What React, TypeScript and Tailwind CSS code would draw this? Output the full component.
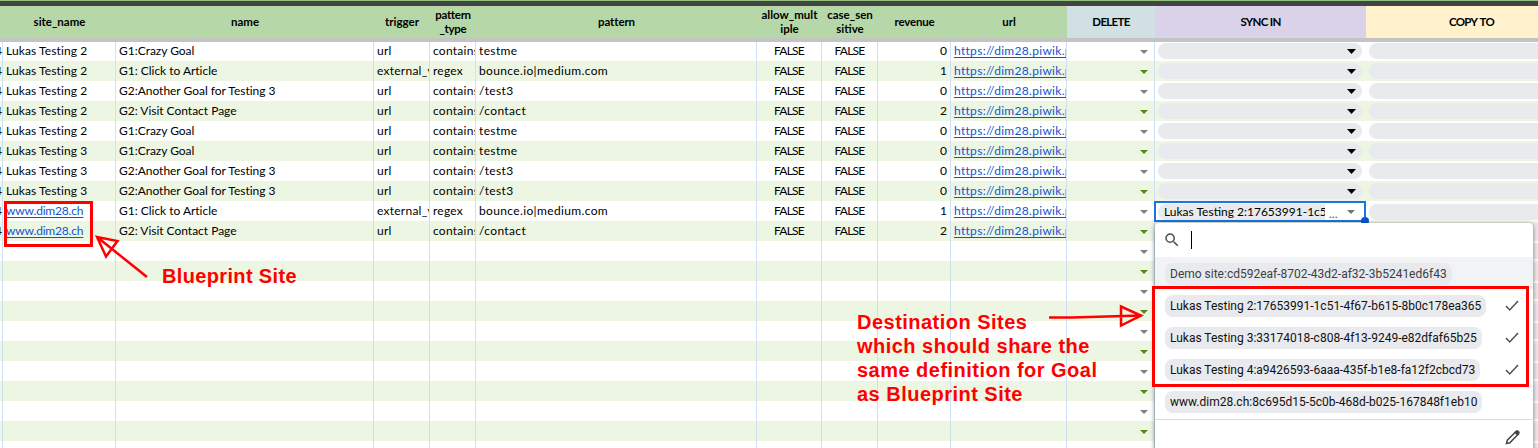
import React from "react";

const GRID =
  "grid grid-cols-[3px_113px_258px_56px_46px_281px_65px_56px_73px_116px_88px_211px_172px]";

type Goal = {
  site: string;
  link?: boolean;
  name: string;
  trigger: string;
  type: string;
  pattern: string;
  revenue: number;
};

const goals: Goal[] = [
  { site: "Lukas Testing 2", name: "G1:Crazy Goal", trigger: "url", type: "contains", pattern: "testme", revenue: 0 },
  { site: "Lukas Testing 2", name: "G1: Click to Article", trigger: "external_v", type: "regex", pattern: "bounce.io|medium.com", revenue: 1 },
  { site: "Lukas Testing 2", name: "G2:Another Goal for Testing 3", trigger: "url", type: "contains", pattern: "/test3", revenue: 0 },
  { site: "Lukas Testing 2", name: "G2: Visit Contact Page", trigger: "url", type: "contains", pattern: "/contact", revenue: 2 },
  { site: "Lukas Testing 2", name: "G1:Crazy Goal", trigger: "url", type: "contains", pattern: "testme", revenue: 0 },
  { site: "Lukas Testing 3", name: "G1:Crazy Goal", trigger: "url", type: "contains", pattern: "testme", revenue: 0 },
  { site: "Lukas Testing 3", name: "G2:Another Goal for Testing 3", trigger: "url", type: "contains", pattern: "/test3", revenue: 0 },
  { site: "Lukas Testing 3", name: "G2:Another Goal for Testing 3", trigger: "url", type: "contains", pattern: "/test3", revenue: 0 },
  { site: "www.dim28.ch", link: true, name: "G1: Click to Article", trigger: "external_v", type: "regex", pattern: "bounce.io|medium.com", revenue: 1 },
  { site: "www.dim28.ch", link: true, name: "G2: Visit Contact Page", trigger: "url", type: "contains", pattern: "/contact", revenue: 2 },
];

const rows: (Goal | null)[] = [...goals, ...Array<null>(11).fill(null)];

const options = [
  { label: "Demo site:cd592eaf-8702-43d2-af32-3b5241ed6f43", checked: false },
  { label: "Lukas Testing 2:17653991-1c51-4f67-b615-8b0c178ea365", checked: true },
  { label: "Lukas Testing 3:33174018-c808-4f13-9249-e82dfaf65b25", checked: true },
  { label: "Lukas Testing 4:a9426593-6aaa-435f-b1e8-fa12f2cbcd73", checked: true },
  { label: "www.dim28.ch:8c695d15-5c0b-468d-b025-167848f1eb10", checked: false },
];

function Caret({ className }: { className: string }) {
  return (
    <svg width="8" height="4" viewBox="0 0 8 4" className={`shrink-0 ${className}`}>
      <path d="M0 0h8L4 4z" fill="currentColor" />
    </svg>
  );
}

function WideCaret({ className }: { className: string }) {
  return (
    <svg width="9" height="5" viewBox="0 0 9 5" className={`shrink-0 ${className}`}>
      <path d="M0 0h9L4.500 5z" fill="currentColor" />
    </svg>
  );
}

function Cell({ children, className = "" }: { children?: React.ReactNode; className?: string }) {
  return (
    <div className={`flex h-5 items-center overflow-hidden whitespace-nowrap border-r border-[#cfe0f2] ${className}`}>
      {children}
    </div>
  );
}

function Head({ lines, className = "" }: { lines: string[]; className?: string }) {
  return (
    <div className={`flex flex-col items-center justify-center whitespace-nowrap leading-[14px] ${className}`}>
      {lines.map((l) => (
        <span key={l}>{l}</span>
      ))}
    </div>
  );
}

function Row({ goal, index }: { goal: Goal | null; index: number }) {
  const odd = index % 2 === 1;
  const selected = index === 8;
  return (
    <div className={`${GRID} h-5 ${odd ? "bg-[#edf6e3]" : "bg-white"}`}>
      <Cell className="justify-end">{goal && "4"}</Cell>
      <Cell className="pl-[3px]">
        {goal && (
          <span className={goal.link ? "text-[#1155cc] underline underline-offset-2 tracking-[-0.18px]" : "tracking-[0.1px]"}>
            {goal.site}
          </span>
        )}
      </Cell>
      <Cell className="pl-[3px] tracking-[-0.02px]">{goal?.name}</Cell>
      <Cell className="pl-[3px] tracking-[0.25px]">{goal?.trigger}</Cell>
      <Cell className="pl-[3px] tracking-[0.25px]">{goal?.type}</Cell>
      <Cell className="pl-[3px] tracking-[0.36px]">{goal?.pattern}</Cell>
      <Cell className="justify-center tracking-[-0.75px]">{goal && "FALSE"}</Cell>
      <Cell className="justify-center tracking-[-0.75px]">{goal && "FALSE"}</Cell>
      <Cell className="justify-end pr-[3px]">{goal?.revenue}</Cell>
      <Cell className="pl-[3px]">
        {goal && (
          <span className="text-[#1155cc] underline underline-offset-2 tracking-[0.3px]">https://dim28.piwik.pro</span>
        )}
      </Cell>
      <Cell className="justify-end pr-[6px] pt-[1px]">
        <Caret className={odd ? "text-[#548a1c]" : "text-[#808080]"} />
      </Cell>
      {selected ? (
        <div className="relative -ml-px flex h-[21px] w-[212px] items-center border-2 border-[#1a73e8] bg-white pl-[2px]">
          <span className="h-4 w-[167px] overflow-hidden whitespace-nowrap rounded-l-lg bg-[#e8eaed] pl-[6px] leading-4">
            Lukas Testing 2:17653991-1c51
          </span>
          <span className="pl-1 pt-1 leading-3 text-[#555555]">...</span>
          <Caret className="absolute right-[9px] top-[7px] text-[#757575]" />
          <span className="absolute -bottom-[5px] -right-[5px] size-2 rounded-full bg-[#0b57d0]" />
        </div>
      ) : (
        <div className="flex items-center pl-[3px]">
          <div className="flex h-4 w-[204px] items-center justify-end rounded-lg bg-[#e8eaed] pr-[6px]">
            <WideCaret className="text-black" />
          </div>
        </div>
      )}
      <div className="flex items-center overflow-hidden pl-[3px]">
        <div className="h-4 w-[204px] shrink-0 rounded-lg bg-[#e8eaed]" />
      </div>
    </div>
  );
}

function Dropdown() {
  return (
    <div className="absolute left-[1155px] top-[223px] flex h-[240px] w-[378px] flex-col overflow-hidden rounded-t-[4px] bg-white font-[Roboto,sans-serif] text-[12px] shadow-[0_1px_5px_rgba(0,0,0,0.5)]">
      <div className="flex h-[34px] shrink-0 items-center pl-[8px]">
        <svg width="18" height="18" viewBox="0 0 24 24" fill="#4d5156">
          <path d="M15.5 14h-.79l-.28-.27A6.47 6.47 0 0 0 16 9.5 6.5 6.5 0 1 0 9.5 16c1.61 0 3.09-.59 4.23-1.57l.27.28v.79l5 4.99L20.49 19zm-6 0C7.01 14 5 11.99 5 9.5S7.01 5 9.5 5 14 7.01 14 9.5 11.99 14 9.5 14" />
        </svg>
        <span className="ml-[10px] h-[18px] w-px bg-black" />
      </div>
      {options.map((o, i) => (
        <div
          key={o.label}
          className={`flex h-8 shrink-0 items-center justify-between pl-[10px] pr-[14px] pt-[2px] ${i === 0 ? "bg-[#f1f3f4] text-[#3c4043]" : "text-[#111111]"}`}
        >
          <span className="h-[22px] whitespace-nowrap rounded-lg bg-[#e8eaed] px-[5px] leading-[22px]">{o.label}</span>
          {o.checked && (
            <svg width="14" height="12" viewBox="0 0 14 12" fill="none" stroke="#4d5156" strokeWidth="1.5">
              <path d="M1 6l3.700 4L13 1" />
            </svg>
          )}
        </div>
      ))}
      <div className="mt-[2px] flex h-[38px] justify-end border-t border-[#dadce0] pr-[12px] pt-[9px]">
        <svg width="16" height="16" viewBox="0 0 16 16">
          <path d="M1.500 14.500l.8-3.300L11 2.500l2.500 2.500-8.700 8.700z" fill="none" stroke="#444746" strokeWidth="1.500" />
          <path d="M9.300 3.800l2-2.200c.6-.6 1.400-.6 2 0l1 1c.6.6.6 1.400 0 2l-2 2z" fill="#444746" />
        </svg>
      </div>
    </div>
  );
}

function Annotations() {
  return (
    <div className="font-['Liberation_Sans',sans-serif] text-[20px] font-bold leading-[24px] tracking-[0.48px] text-[#ff0000]">
      <div className="absolute left-[4px] top-[201px] h-[46px] w-[89px] border-[3px] border-[#ff0000]" />
      <div className="absolute left-[1152px] top-[286px] h-[101px] w-[377px] border-[3px] border-[#ff0000]" />
      <div className="absolute left-[162px] top-[264px] whitespace-nowrap tracking-[0.35px]">Blueprint Site</div>
      <div className="absolute left-[857px] top-[310px] whitespace-nowrap">
        <div>Destination Sites</div>
        <div>which should share the</div>
        <div>same definition for Goal</div>
        <div>as Blueprint Site</div>
      </div>
      <svg className="absolute left-[94px] top-[230px]" width="56" height="50" fill="none" stroke="#ff0000" strokeWidth="2.500">
        <path d="M53 47L3 7M3 7l20.500 4L12 26.500z" />
      </svg>
      <svg className="absolute left-[1046px] top-[300px]" width="100" height="32" fill="none" stroke="#ff0000" strokeWidth="2.500">
        <path d="M3 17.500h23L95 15.500M75 6.500v19L95 15.500z" />
      </svg>
    </div>
  );
}

export default function App() {
  return (
    <div className="relative h-[448px] w-[1538px] overflow-hidden bg-white font-[Lato,sans-serif] text-[12px] text-black">
      <div className="h-px bg-[#93c47d]" />
      <div className="h-[5px] bg-[#434343]" />
      <div className={`${GRID} h-8 bg-[#b6d7a8] text-[11.5px] font-bold`}>
        <div />
        <Head lines={["site_name"]} />
        <Head lines={["name"]} />
        <Head lines={["trigger"]} />
        <Head lines={["pattern", "_type"]} className="tracking-[-0.3px]" />
        <Head lines={["pattern"]} className="tracking-[-0.1px]" />
        <Head lines={["allow_mult", "iple"]} />
        <Head lines={["case_sen", "sitive"]} />
        <Head lines={["revenue"]} className="tracking-[-0.2px]" />
        <Head lines={["url"]} />
        <Head lines={["DELETE"]} className="bg-[#d0e0e3] tracking-[-0.7px]" />
        <Head lines={["SYNC IN"]} className="bg-[#d9d2e9] tracking-[-0.7px]" />
        <Head lines={["COPY TO"]} className="w-[211px] bg-[#fff2cc] tracking-[-0.7px] [word-spacing:1px]" />
      </div>
      <div className="relative z-10 h-1 bg-[#c4c4c4]" />
      <div className="-mt-px">
        {rows.map((g, i) => (
          <Row key={i} goal={g} index={i} />
        ))}
      </div>
      <Dropdown />
      <Annotations />
    </div>
  );
}
